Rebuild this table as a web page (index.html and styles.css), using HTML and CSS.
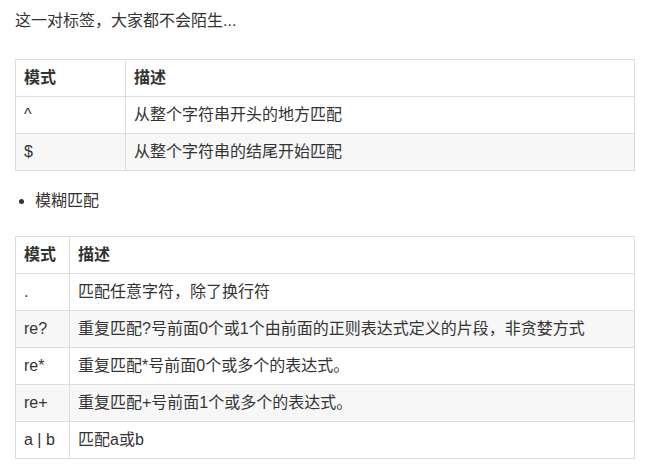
FILE: index.html
```html
<!DOCTYPE html>
<html lang="zh-CN">
<head>
<meta charset="utf-8">
<title>正则</title>
<link rel="stylesheet" href="styles.css">
</head>
<body>
<div class="content">
  <p class="intro">这一对标签，大家都不会陌生...</p>
  <table class="md-table t1">
    <colgroup><col class="c1"><col></colgroup>
    <thead><tr><th>模式</th><th>描述</th></tr></thead>
    <tbody>
      <tr><td>^</td><td>从整个字符串开头的地方匹配</td></tr>
      <tr><td>$</td><td>从整个字符串的结尾开始匹配</td></tr>
    </tbody>
  </table>
  <ul class="list">
    <li>模糊匹配</li>
  </ul>
  <table class="md-table t2">
    <colgroup><col class="c1"><col></colgroup>
    <thead><tr><th>模式</th><th>描述</th></tr></thead>
    <tbody>
      <tr><td>.</td><td>匹配任意字符，除了换行符</td></tr>
      <tr><td>re?</td><td>重复匹配?号前面0个或1个由前面的正则表达式定义的片段，非贪婪方式</td></tr>
      <tr><td>re*</td><td>重复匹配*号前面0个或多个的表达式。</td></tr>
      <tr><td>re+</td><td>重复匹配+号前面1个或多个的表达式。</td></tr>
      <tr><td>a | b</td><td>匹配a或b</td></tr>
    </tbody>
  </table>
</div>
</body>
</html>
```
FILE: styles.css
```css
html, body {
  margin: 0;
  padding: 0;
  background: #fff;
}
body {
  font-family: "Liberation Sans", "Noto Sans CJK SC", sans-serif;
  font-size: 16px;
  line-height: 20px;
  color: #333;
}
.content {
  padding: 11px 13px 0 15px;
}
.intro {
  margin: 0 0 28px;
}
.md-table {
  width: 620px;
  border-collapse: collapse;
  table-layout: fixed;
}
.md-table th,
.md-table td {
  border: 1px solid #ddd;
  padding: 8px 8px;
  text-align: left;
  vertical-align: middle;
  line-height: 20px;
  white-space: nowrap;
}
.md-table th {
  font-weight: bold;
}
.md-table tbody tr:nth-child(2n) {
  background: #f7f7f7;
}
.t1 .c1 { width: 110px; }
.t2 .c1 { width: 54px; }
.list {
  margin: 20px 0 25px;
  padding-left: 20px;
}
.list li {
  line-height: 20px;
}
```
